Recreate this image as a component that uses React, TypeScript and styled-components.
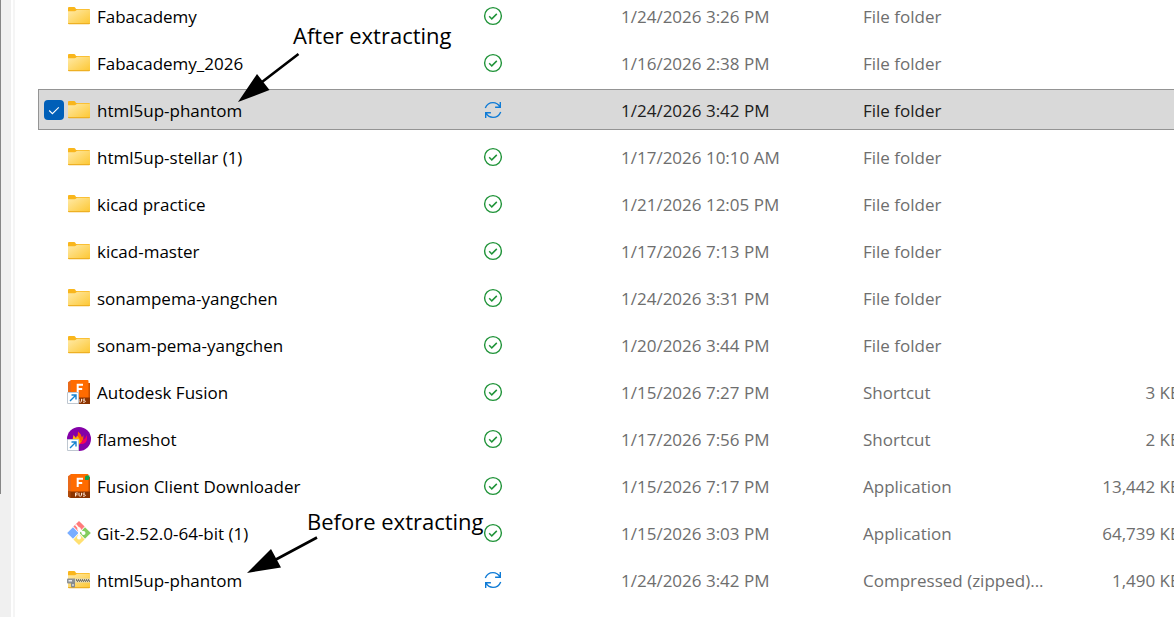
import React, { useState } from "react";
import styled, { createGlobalStyle } from "styled-components";

const GlobalStyle = createGlobalStyle`
  *, *::before, *::after { box-sizing: border-box; }
  html, body, #root { height: 100%; }
  body {
    margin: 0;
    overflow: hidden;
    background: #ffffff;
    color: #000000;
    font-family: "Segoe UI", "Open Sans", "Noto Sans", sans-serif;
    font-size: 17px;
    line-height: 24px;
  }
`;

const Window = styled.div`
  position: relative;
  display: flex;
  height: 100%;
  overflow: hidden;
`;

const NavEdge = styled.div`
  flex: none;
  width: 11px;
  background: #f0f0f0;
`;

const NavScroll = styled.div`
  width: 1px;
  height: 80%;
  background: #868686;
`;

const Splitter = styled.div`
  flex: none;
  width: 2px;
  margin-left: 2px;
  background: #f5f5f5;
`;

const ListPane = styled.main`
  flex: 1;
  min-width: 0;
  overflow: hidden;
  padding-left: 23px;
`;

const FileTable = styled.table`
  width: calc(100% + 7px);
  margin-top: -11px;
  table-layout: fixed;
  border-collapse: separate;
  border-spacing: 0 6px;
`;

const Column = styled.col<{ $width?: number }>`
  width: ${(p) => (p.$width ? `${p.$width}px` : "auto")};
`;

const Row = styled.tr<{ $selected: boolean }>`
  --detail: ${(p) => (p.$selected ? "#202020" : "#6e6e6e")};
  --fill: ${(p) => (p.$selected ? "#d9d9d9" : "transparent")};
  --edge: ${(p) => (p.$selected ? "#949494" : "transparent")};
`;

const Cell = styled.td`
  height: 41px;
  padding: 3px 0 0;
  border: solid var(--edge);
  border-width: 1px 0;
  background: var(--fill);
  color: var(--detail);
  text-align: left;
  white-space: nowrap;
`;

const NameCell = styled(Cell).attrs({ as: "th", scope: "row" })`
  padding: 1px 0 0 5px;
  border-left-width: 1px;
  color: #000000;
  font-weight: 400;
`;

const NameContent = styled.div`
  display: flex;
  align-items: center;
  height: 38px;
`;

const StatusCell = styled(Cell)`
  padding-top: 1px;
  svg { display: block; }
`;

const SizeCell = styled(Cell)`
  text-align: right;
`;

const SelectBox = styled.label`
  display: grid;
  width: 20px;
  height: 20px;
  margin-right: 3px;
  > * { grid-area: 1 / 1; }
  svg { pointer-events: none; }
`;

const SelectInput = styled.input`
  appearance: none;
  width: 20px;
  height: 20px;
  margin: 0;
  border-radius: 4px;
  &:checked { background: #005fb8; }
`;

const FileName = styled.span`
  padding: 2px 0 0 6px;
`;

const Note = styled.div<{ $x: number; $y: number }>`
  position: absolute;
  left: ${(p) => p.$x}px;
  top: ${(p) => p.$y}px;
  font-size: 22px;
  line-height: 30px;
  white-space: nowrap;
  pointer-events: none;
`;

const Arrows = styled.svg`
  position: absolute;
  left: 0;
  top: 0;
  pointer-events: none;
`;

const FolderIcon = () => (
  <svg width="24" height="24" viewBox="0 0 24 24" aria-hidden="true">
    <defs>
      <linearGradient id="folder" x1="0" y1="0" x2="1" y2="1">
        <stop offset="0" stopColor="#ffeaa8" />
        <stop offset="1" stopColor="#fdc732" />
      </linearGradient>
    </defs>
    <path d="M1 4q0-1 1-1h5q1 0 1.500 1l.5 1H22q1 0 1 1v5H1z" fill="#f9b61c" />
    <path d="M1 7.200h6.500q1 0 1.600-.6l.5-.5q.3-.3 1-.3H23V19q0 1-1 1H2q-1 0-1-1z" fill="url(#folder)" />
    <path d="M1 19h22q0 1.200-1 1.200H2Q1 20.200 1 19z" fill="#eeb023" />
  </svg>
);

const ZipIcon = () => (
  <svg width="24" height="24" viewBox="0 0 24 24" aria-hidden="true">
    <path d="M1 4q0-1 1-1h5q1 0 1.500 1l.5 1H22q1 0 1 1v5H1z" fill="#f9b61c" />
    <path d="M1 7.200h6.500q1 0 1.600-.6l.5-.5q.3-.3 1-.3H23V19q0 1-1 1H2q-1 0-1-1z" fill="url(#folder)" />
    <path d="M1 19h22q0 1.200-1 1.200H2Q1 20.200 1 19z" fill="#eeb023" />
    <path d="M8 10.500h15v4H8z" fill="#e3d9b4" />
    <path d="M9 12h14" stroke="#5c5a50" strokeWidth="1.300" strokeDasharray="1 1" />
    <path d="M10 13.200h13" stroke="#5c5a50" strokeWidth="1.200" strokeDasharray="1 1" />
    <path d="M0 11.500q0-1 1-1h7v4H6.500v1H1q-1 0-1-1z" fill="#8d9296" />
    <path d="M1.500 12h3.500v1.500H1.500z" fill="#e9ebec" />
    <path d="M4 14h4v4.500q0 1-1 1H5q-1 0-1-1z" fill="#868b90" />
    <path d="M6 16v2" stroke="#f0f0f0" strokeWidth="1.200" />
  </svg>
);

const LinkBadge = () => (
  <g>
    <path d="M.5 12.500h11v11H.5z" fill="#fff" stroke="#bfc7d0" />
    <path d="M3 21l5.500-5.500M4.500 15h4.500v4.500" fill="none" stroke="#1583d0" strokeWidth="1.400" />
  </g>
);

const FusionIcon = ({ shortcut = false }: { shortcut?: boolean }) => (
  <svg width="24" height="24" viewBox="0 0 24 24" aria-hidden="true">
    <path d="M1 2.200L4 0v18H1z" fill="#e96a1a" />
    <path d="M4 0h16.500q1 0 1 1v2H23v15H4z" fill="#ff6b00" />
    <path d="M21.500 3H23v15h-1.500z" fill="#c85000" />
    <path d="M1 17.500h22V24H3.500L1 22.500z" fill="#8b3300" />
    <path d="M1 17.500h2.500V24L1 22.500z" fill="#b04a0a" />
    <path d="M10.700 13V4.700h5.300M10.700 9h4.500" fill="none" stroke="#fff" strokeWidth="2" />
    <path
      d="M8.500 22.500v-3.500h2.300M8.500 20.800h2M12 18.800v2.500q0 .8.900.8h.7q.9 0 .9-.8v-2.500M18 19.100h-1.300q-.7 0-.7.700t.7.800h.8q.8 0 .8.800t-.8.800H16"
      fill="none"
      stroke="#ffe3cf"
      strokeWidth="1"
    />
    {shortcut ? <LinkBadge /> : <path d="M18 2.500l1-1h3.500v3l-1 1.500H18z" fill="#0fa04d" />}
  </svg>
);

const FlameshotIcon = () => (
  <svg width="24" height="24" viewBox="0 0 24 24" aria-hidden="true">
    <circle cx="12" cy="12" r="12" fill="#8400a8" />
    <path d="M12 17l-1.500-6 .5-6.500q3.500 2.500 4 6l1.500-2.500q0 6-3 9z" fill="#ff5c00" />
    <path d="M5.500 13l1-5 2.500 3 1-2.500q3 3 3.500 6.500l-1.500 3H6z" fill="#ffb900" />
    <path d="M12 17q3.500-1 5-6l.8 1.500q1-3 2.200-4.500v4q-.5 4.500-5 5h-3z" fill="#f5005e" />
    <LinkBadge />
  </svg>
);

const GitIcon = () => (
  <svg width="24" height="24" viewBox="0 0 24 24" aria-hidden="true">
    <path d="M12 0l5.600 5.600-5.600 5.600-5.600-5.600z" fill="#ff7b7b" />
    <path d="M6 6.300l5.500 5.700L6 17.700.2 12z" fill="#79adff" />
    <path d="M18 6.300l5.800 5.700-5.800 5.700-5.500-5.700z" fill="#83cd5d" />
    <path d="M12 12.800l5.600 5.600L12 24l-5.600-5.600z" fill="#ffe071" />
    <path d="M8.500 3.500l3.500 4v9M12 8l4.500 4" fill="none" stroke="#fff" strokeWidth="1.700" />
    <circle cx="12" cy="8" r="1.800" fill="#fff" />
    <circle cx="16.500" cy="12" r="2" fill="#fff" />
    <circle cx="12" cy="16.500" r="2" fill="#fff" />
  </svg>
);

const SyncedIcon = () => (
  <svg width="20" height="20" viewBox="0 0 20 20" role="img" aria-label="Synced">
    <circle cx="10" cy="10" r="8.400" fill="none" stroke="#1f9338" strokeWidth="1.400" />
    <path d="M6.200 10.200l2.600 2.700 5-5" fill="none" stroke="#1f9338" strokeWidth="1.500" />
  </svg>
);

const SyncingIcon = () => (
  <svg width="20" height="20" viewBox="0 0 20 20" role="img" aria-label="Syncing">
    <g fill="none" stroke="#0f7bd6" strokeWidth="1.400">
      <path d="M2.300 8Q4.500 2.600 10 2.600q4.500 0 7 4.200M17.300 2v5.200h-5.200" />
      <path d="M17.700 12Q15.500 17.400 10 17.400q-4.500 0-7-4.200M2.700 18v-5.200h5.200" />
    </g>
  </svg>
);

const icons = {
  folder: <FolderIcon />,
  zip: <ZipIcon />,
  fusionLink: <FusionIcon shortcut />,
  fusion: <FusionIcon />,
  flameshot: <FlameshotIcon />,
  git: <GitIcon />,
};

interface FileItem {
  icon: keyof typeof icons;
  name: string;
  syncing?: boolean;
  date: string;
  type: string;
  size?: string;
}

const files: FileItem[] = [
  { icon: "folder", name: "Fabacademy", date: "1/24/2026 3:26 PM", type: "File folder" },
  { icon: "folder", name: "Fabacademy_2026", date: "1/16/2026 2:38 PM", type: "File folder" },
  { icon: "folder", name: "html5up-phantom", syncing: true, date: "1/24/2026 3:42 PM", type: "File folder" },
  { icon: "folder", name: "html5up-stellar (1)", date: "1/17/2026 10:10 AM", type: "File folder" },
  { icon: "folder", name: "kicad practice", date: "1/21/2026 12:05 PM", type: "File folder" },
  { icon: "folder", name: "kicad-master", date: "1/17/2026 7:13 PM", type: "File folder" },
  { icon: "folder", name: "sonampema-yangchen", date: "1/24/2026 3:31 PM", type: "File folder" },
  { icon: "folder", name: "sonam-pema-yangchen", date: "1/20/2026 3:44 PM", type: "File folder" },
  { icon: "fusionLink", name: "Autodesk Fusion", date: "1/15/2026 7:27 PM", type: "Shortcut", size: "3 KB" },
  { icon: "flameshot", name: "flameshot", date: "1/17/2026 7:56 PM", type: "Shortcut", size: "2 KB" },
  { icon: "fusion", name: "Fusion Client Downloader", date: "1/15/2026 7:17 PM", type: "Application", size: "13,442 KB" },
  { icon: "git", name: "Git-2.52.0-64-bit (1)", date: "1/15/2026 3:03 PM", type: "Application", size: "64,739 KB" },
  { icon: "zip", name: "html5up-phantom", syncing: true, date: "1/24/2026 3:42 PM", type: "Compressed (zipped)...", size: "1,490 KB" },
];

export default function App() {
  const [selected, setSelected] = useState<number[]>([2]);

  const toggle = (index: number) =>
    setSelected((current) =>
      current.includes(index) ? current.filter((i) => i !== index) : [...current, index]
    );

  return (
    <>
      <GlobalStyle />
      <Window>
        <NavEdge>
          <NavScroll />
        </NavEdge>
        <Splitter />
        <ListPane>
          <FileTable>
            <colgroup>
              <Column $width={445} />
              <Column $width={138} />
              <Column $width={242} />
              <Column $width={200} />
              <Column />
            </colgroup>
            <tbody>
              {files.map((file, index) => {
                const isSelected = selected.includes(index);
                return (
                  <Row key={index} $selected={isSelected}>
                    <NameCell>
                      <NameContent>
                        <SelectBox htmlFor={`file-${index}`}>
                          <SelectInput
                            id={`file-${index}`}
                            type="checkbox"
                            aria-label={file.name}
                            checked={isSelected}
                            onChange={() => toggle(index)}
                          />
                          {isSelected && (
                            <svg width="20" height="20" viewBox="0 0 20 20" aria-hidden="true">
                              <path d="M5.200 10.500l3.200 3.200 6.400-6.400" fill="none" stroke="#fff" strokeWidth="1.100" />
                            </svg>
                          )}
                        </SelectBox>
                        {icons[file.icon]}
                        <FileName>{file.name}</FileName>
                      </NameContent>
                    </NameCell>
                    <StatusCell>{file.syncing ? <SyncingIcon /> : <SyncedIcon />}</StatusCell>
                    <Cell>{file.date}</Cell>
                    <Cell>{file.type}</Cell>
                    <SizeCell>{file.size}</SizeCell>
                  </Row>
                );
              })}
            </tbody>
          </FileTable>
        </ListPane>
        <Note $x={293} $y={20}>After extracting</Note>
        <Note $x={307} $y={506}>Before extracting</Note>
        <Arrows width="520" height="600" viewBox="0 0 520 600" aria-hidden="true">
          <path d="M298.500 54L262 82M317 537.500L275 560" stroke="#000" strokeWidth="2.600" />
          <path d="M238 102l19-28 12.500 16zM247 573l24-24 10 18.500z" />
        </Arrows>
      </Window>
    </>
  );
}
